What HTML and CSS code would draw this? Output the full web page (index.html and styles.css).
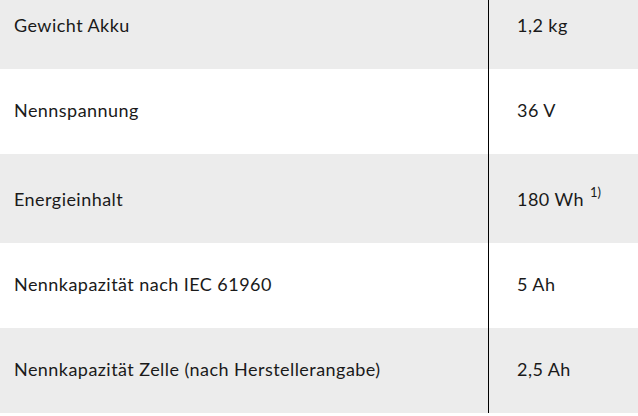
FILE: index.html
```html
<!DOCTYPE html>
<html lang="de">
<head>
<meta charset="utf-8">
<link rel="stylesheet" href="styles.css">
</head>
<body>
<div class="specs">
  <div class="row shaded">
    <div class="label">Gewicht Akku</div>
    <div class="value">1,2 kg</div>
  </div>
  <div class="row">
    <div class="label">Nennspannung</div>
    <div class="value">36 V</div>
  </div>
  <div class="row shaded tall">
    <div class="label">Energieinhalt</div>
    <div class="value">180 Wh <sup class="note">1)</sup></div>
  </div>
  <div class="row">
    <div class="label">Nennkapazität nach IEC 61960</div>
    <div class="value">5 Ah</div>
  </div>
  <div class="row shaded">
    <div class="label">Nennkapazität Zelle (nach Herstellerangabe)</div>
    <div class="value">2,5 Ah</div>
  </div>
</div>
</body>
</html>
```
FILE: styles.css
```css
html, body {
  margin: 0;
  padding: 0;
  background: #fff;
}
body {
  width: 638px;
  height: 416px;
  overflow: hidden;
  font-family: Lato, "Open Sans", sans-serif;
  font-size: 18px;
  font-weight: 400;
  letter-spacing: 0.45px;
  color: #1a1a1a;
}
.specs {
  margin-top: -16px;
}
.row {
  display: grid;
  grid-template-columns: 488px 1fr;
}
.shaded {
  background: #ececec;
}
.label, .value {
  padding: 31px 0 34px;
  line-height: 20px;
}
.tall .label, .tall .value {
  padding-top: 35px;
}
.label {
  padding-left: 14px;
}
.value {
  padding-left: 28px;
  border-left: 1px solid #000;
}
.note {
  font-size: 13px;
  line-height: 0;
  letter-spacing: 0;
  margin-left: 1px;
  vertical-align: 9px;
}
```
